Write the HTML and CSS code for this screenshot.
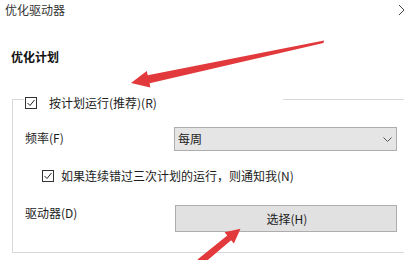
FILE: index.html
```html
<!DOCTYPE html>
<html lang="zh-CN">
<head>
<meta charset="utf-8">
<title>优化驱动器</title>
<link rel="stylesheet" href="styles.css">
</head>
<body>
<div class="page">
  <div class="titlebar">
    <span class="title">优化驱动器</span>
    <svg class="close" width="12" height="12" viewBox="0 0 12 12"><path d="M1 1 L11 11 M11 1 L1 11" stroke="#444" stroke-width="1" fill="none"/></svg>
  </div>
  <div class="heading">优化计划</div>
  <div class="group">
    <div class="group-head">
      <span class="seg seg-left"></span>
      <label class="legend">
        <span class="check"><svg width="12" height="12" viewBox="0 0 12 12"><rect x="0.5" y="0.5" width="11" height="11" fill="#fff" stroke="#333"/><path d="M2.5 6 L5 8.5 L9.5 3" stroke="#222" stroke-width="1" fill="none"/></svg></span>
        <span class="check-text">按计划运行(推荐)(R)</span>
      </label>
      <span class="seg seg-right"></span>
    </div>
    <div class="row row-freq">
      <span class="label label-freq">频率(F)</span>
      <div class="select">
        <span class="select-text">每周</span>
        <svg class="chev" width="9" height="5" viewBox="0 0 9 5"><path d="M0.5 0.5 L4.5 4.5 L8.5 0.5" stroke="#555" stroke-width="1" fill="none"/></svg>
      </div>
    </div>
    <label class="row row-notify">
      <span class="check"><svg width="12" height="12" viewBox="0 0 12 12"><rect x="0.5" y="0.5" width="11" height="11" fill="#fff" stroke="#333"/><path d="M2.5 6 L5 8.5 L9.5 3" stroke="#222" stroke-width="1" fill="none"/></svg></span>
      <span class="check-text">如果连续错过三次计划的运行，则通知我(N)</span>
    </label>
    <div class="row row-drive">
      <span class="label label-drive">驱动器(D)</span>
      <button class="btn">选择(H)</button>
    </div>
  </div>
  <svg class="arrows" width="404" height="260" viewBox="0 0 404 260">
    <polygon fill="#e2393c" points="324,40.5 323.5,43 149.6,83.2 150.3,87.5 131,83 146.8,71 147.7,75.3"/>
    <polygon fill="#e2393c" points="202.5,264.5 231.1,240.2 233.9,243.4 240.5,228.8 224.6,232.3 227.3,235.5 197.5,259.5"/>
  </svg>
</div>
</body>
</html>
```
FILE: styles.css
```css
* { box-sizing: border-box; }
html, body {
  margin: 0;
  padding: 0;
  background: #fff;
}
body {
  width: 404px;
  height: 260px;
  overflow: hidden;
  font-family: "Noto Sans CJK SC", "Noto Sans", sans-serif;
  font-size: 12px;
  color: #1c1c1c;
}
.page {
  position: relative;
  width: 404px;
  height: 260px;
  overflow: hidden;
}
.titlebar {
  display: flex;
  align-items: center;
  justify-content: space-between;
  height: 20px;
  padding-left: 5px;
}
.title {
  line-height: 20px;
  color: #333;
}
.close {
  margin-right: -6px;
  margin-top: -1px;
}
.heading {
  margin-top: 27px;
  margin-left: 11px;
  line-height: 20px;
  font-weight: bold;
  color: #111;
}
.group {
  margin-top: 32px;
  margin-left: 12px;
  width: 420px;
  border-left: 1px solid #d8d8d8;
  border-bottom: 1px solid #d8d8d8;
  padding-bottom: 20px;
}
.group-head {
  display: flex;
  align-items: flex-start;
  height: 12px;
}
.seg {
  height: 1px;
  background: #d8d8d8;
}
.seg-left { width: 11px; }
.seg-right { flex: 1; }
.legend {
  display: flex;
  align-items: center;
  width: 259px;
  height: 14px;
  margin-top: -3px;
  padding-left: 1px;
}
.check {
  display: flex;
  width: 12px;
  height: 12px;
}
.check-text {
  line-height: 14px;
  margin-left: 12px;
  white-space: nowrap;
}
.row {
  display: flex;
  padding-left: 12px;
}
.row-freq {
  margin-top: 16px;
  align-items: flex-start;
}
.label {
  width: 149px;
  line-height: 14px;
}
.label-freq { margin-top: 4px; }
.select {
  display: flex;
  align-items: center;
  justify-content: space-between;
  width: 223px;
  height: 24px;
  background: #e5e5e5;
  border: 1px solid #adadad;
  padding: 0 4px 0 3px;
}
.select-text { line-height: 14px; }
.chev { margin-top: 1px; }
.row-notify {
  margin-top: 18px;
  padding-left: 29px;
  align-items: center;
  height: 14px;
}
.row-notify .check-text { margin-left: 7px; }
.row-drive {
  margin-top: 22px;
  align-items: flex-start;
}
.label-drive { margin-top: 1px; }
.btn {
  margin-left: 1px;
  width: 222px;
  height: 27px;
  background: #e1e1e1;
  border: 1px solid #adadad;
  font-family: inherit;
  font-size: 12px;
  color: #1c1c1c;
  padding: 0;
  padding-left: 2px;
}
.arrows {
  position: absolute;
  left: 0;
  top: 0;
  pointer-events: none;
}
```
